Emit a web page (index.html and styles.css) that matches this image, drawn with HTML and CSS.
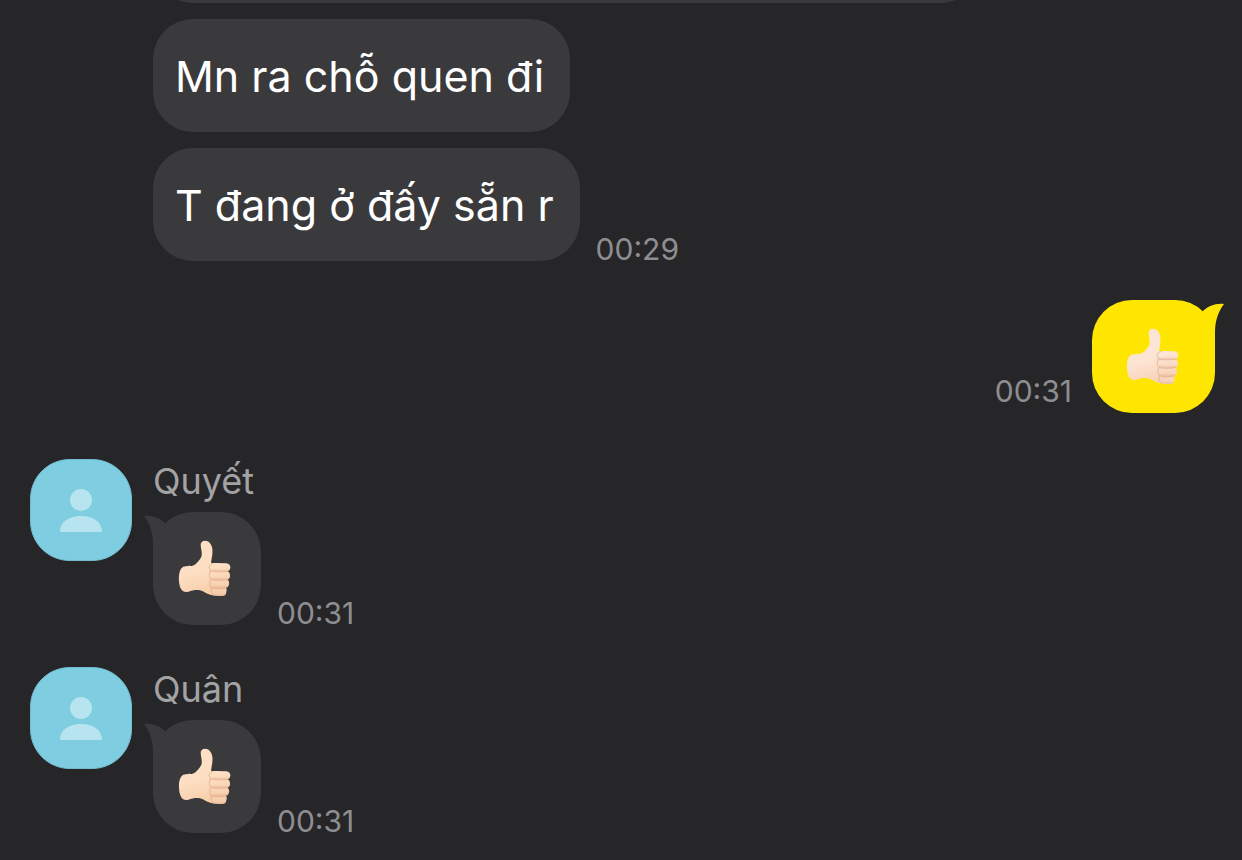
FILE: index.html
```
<!DOCTYPE html>
<html lang="vi">
    <head>
        <meta charset="utf-8">
        <meta name="viewport" content="width=device-width, initial-scale=1">
        <title>Chat</title>
        <link rel="stylesheet" href="styles.css">
    </head>
    <body>
        <!-- shared icons -->
        <svg class="sprite" aria-hidden="true">
            <defs>
                <linearGradient id="hand-shade" x1="0" y1="0" x2="0.25" y2="1">
                    <stop offset="0.6" stop-color="#e8a878" stop-opacity="0"/>
                    <stop offset="1" stop-color="#e8a878" stop-opacity="0.3"/>
                </linearGradient>
                <linearGradient id="finger-shade" x1="0" y1="0" x2="0" y2="1">
                    <stop offset="0.6" stop-color="#dc9a70" stop-opacity="0"/>
                    <stop offset="1" stop-color="#d08a60" stop-opacity="0.3"/>
                </linearGradient>
            </defs>
            <symbol id="thumb" viewBox="36 27 180 180">
                <path class="skin" d="M55 110C64 107 78 110 87 106C97 98 104 90 109 80C113 70 107 54 107 44C107 37 112 32 120 32C132 32 140 42 142 56C144 70 140 84 138 98C142 100 148 99 154 99L184 100C193 101 196 107 196 112C196 119 192 123 188 124C193 126 195 131 195 137C195 143 192 147 187 149C192 152 193 157 192 163C191 169 188 172 183 174C186 178 185 184 183 190C182 196 178 198 172 198L150 197C134 195 124 190 114 184C102 178 84 180 70 185C61 188 54 186 49 178C39 161 38 118 55 110Z"/>
                <path d="M55 110C64 107 78 110 87 106C97 98 104 90 109 80C113 70 107 54 107 44C107 37 112 32 120 32C132 32 140 42 142 56C144 70 140 84 138 98C142 100 148 99 154 99L184 100C193 101 196 107 196 112C196 119 192 123 188 124C193 126 195 131 195 137C195 143 192 147 187 149C192 152 193 157 192 163C191 169 188 172 183 174C186 178 185 184 183 190C182 196 178 198 172 198L150 197C134 195 124 190 114 184C102 178 84 180 70 185C61 188 54 186 49 178C39 161 38 118 55 110Z" fill="url(#hand-shade)"/>
                <rect x="133" y="101" width="63" height="23" rx="11" fill="url(#finger-shade)"/>
                <rect x="136" y="126" width="58" height="23" rx="11" fill="url(#finger-shade)"/>
                <rect x="136" y="151" width="55" height="23" rx="11" fill="url(#finger-shade)"/>
                <rect x="138" y="175" width="46" height="22" rx="11" fill="url(#finger-shade)"/>
                <path class="crease" d="M144 101C131 102 130 114 137 123C132 129 131 142 138 149C133 156 133 168 140 174C136 180 137 188 143 193"/>
                <path class="crease" d="M137 123C150 127 172 125 187 124M138 149C152 152 172 151 186 149M140 174C152 177 168 176 182 174"/>
            </symbol>
            <symbol id="person" viewBox="0 0 102 102">
                <path fill="#7ecde1" d="M40 0.5H62C84 0.5 101.5 18 101.5 40V62C101.5 84 84 101.5 62 101.5H40C18 101.5 0.5 84 0.5 62V40C0.5 18 18 0.5 40 0.5Z" stroke="#74bccd"/>
                <circle fill="#b7e4ee" cx="51" cy="41" r="11"/>
                <path fill="#b7e4ee" d="M30 73C30 62 40 57 51 57C62 57 72 62 72 73Z"/>
            </symbol>
            <symbol id="tail" viewBox="0 0 24 42">
                <path fill="currentColor" d="M0 4C8 3 16 6 21 11L24 42H9V32C9 21 6 12 0 4Z"/>
            </symbol>
        </svg>

        <main class="chat">
            <section class="group">
                <div class="row">
                    <div class="bubble long"></div>
                </div>
                <div class="row">
                    <div class="bubble">Mn ra chỗ quen đi</div>
                </div>
                <div class="row">
                    <div class="bubble">T đang ở đấy sẵn r</div>
                    <time class="time">00:29</time>
                </div>
            </section>

            <section class="group mine">
                <div class="row">
                    <time class="time">00:31</time>
                    <div class="bubble">
                        <svg class="tail" aria-hidden="true"><use href="#tail"/></svg>
                        <svg class="emoji" role="img" aria-label="👍🏻"><use href="#thumb"/></svg>
                    </div>
                </div>
            </section>

            <section class="group">
                <svg class="avatar" aria-hidden="true"><use href="#person"/></svg>
                <div class="name">Quyết</div>
                <div class="row">
                    <div class="bubble">
                        <svg class="tail" aria-hidden="true"><use href="#tail"/></svg>
                        <svg class="emoji" role="img" aria-label="👍🏻"><use href="#thumb"/></svg>
                    </div>
                    <time class="time">00:31</time>
                </div>
            </section>

            <section class="group">
                <svg class="avatar" aria-hidden="true"><use href="#person"/></svg>
                <div class="name">Quân</div>
                <div class="row">
                    <div class="bubble">
                        <svg class="tail" aria-hidden="true"><use href="#tail"/></svg>
                        <svg class="emoji" role="img" aria-label="👍🏻"><use href="#thumb"/></svg>
                    </div>
                    <time class="time">00:31</time>
                </div>
            </section>
        </main>
    </body>
</html>
```
FILE: styles.css
```
* {
    box-sizing: border-box;
}
body {
    margin: 0;
    background: #262628;
    color: #fff;
    font-family: Inter, "Noto Sans", sans-serif;
    overflow: hidden;
}
.sprite {
    position: absolute;
    width: 0;
    height: 0;
}

/* the thread is scrolled, its first message is mostly out of view */
.chat {
    margin-top: -110px;
    padding: 0 27px 27px 30px;
}

.group {
    display: grid;
    grid-template-columns: 102px 1fr;
    column-gap: 21px;
    margin-bottom: 42px;
}
.group > .row,
.group > .name {
    grid-column: 2;
}
.avatar {
    grid-column: 1;
    grid-row: 1 / 3;
    width: 102px;
    height: 102px;
}
.name {
    grid-row: 1;
    height: 53px;
    line-height: 44px;
    font-size: 36px;
    color: #a3a3a5;
}

.row {
    display: flex;
    align-items: flex-end;
    gap: 16px;
}
.row + .row {
    margin-top: 16px;
}
.bubble {
    position: relative;
    display: flex;
    align-items: center;
    height: 113px;
    padding: 0 26px 0 22px;
    border-radius: 40px;
    background: #3a3a3c;
    color: #fff;
    font-size: 43px;
}
.bubble:has(.emoji) {
    padding: 0 24px;
}
.long {
    width: 78%;
}
.time {
    font-size: 30px;
    line-height: 24px;
    color: #8e8e90;
}

.emoji {
    --skin: #fddfc3;
    width: 60px;
    height: 60px;
}
.skin {
    fill: var(--skin);
}
.crease {
    fill: none;
    stroke: #d9a07c;
    stroke-width: 3;
    stroke-linecap: round;
    opacity: 0.6;
}
.tail {
    position: absolute;
    top: 0;
    left: -9px;
    width: 24px;
    height: 42px;
    color: #3a3a3c;
}

/* own messages */
.mine {
    display: block;
    margin-top: -3px;
    margin-bottom: 46px;
}
.mine .row {
    justify-content: flex-end;
    gap: 20px;
}
.mine .bubble:has(.emoji) {
    padding: 0 30px 0 33px;
    background: #ffe600;
}
.mine .tail {
    left: auto;
    right: -9px;
    color: #ffe600;
    transform: scaleX(-1);
}
.mine .emoji {
    --skin: #fde5d5;
}
.mine .time {
    padding-bottom: 10px;
}
```
